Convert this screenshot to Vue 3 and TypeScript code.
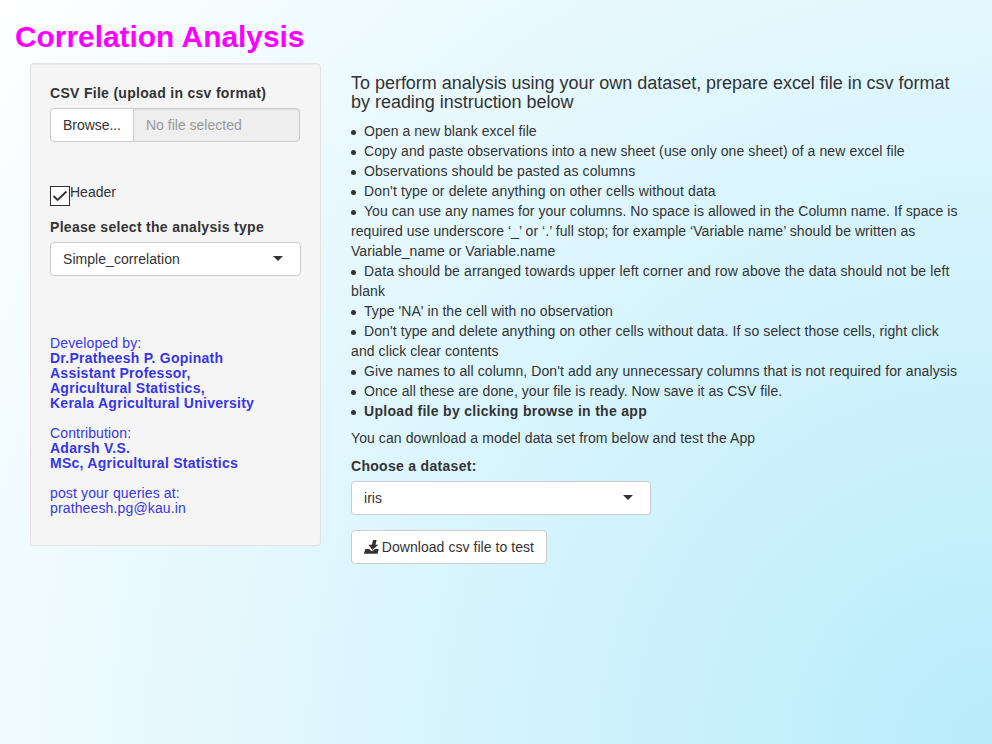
<script setup lang="ts">
import { ref } from 'vue'

interface Instruction {
  text: string
  kind?: 'strong' | 'tight' | 'loose'
}

const header = ref(true)

const instructions: Instruction[] = [
  { text: 'Open a new blank excel file', kind: 'tight' },
  { text: 'Copy and paste observations into a new sheet (use only one sheet) of a new excel file' },
  { text: 'Observations should be pasted as columns' },
  { text: "Don't type or delete anything on other cells without data", kind: 'loose' },
  {
    text: 'You can use any names for your columns. No space is allowed in the Column name. If space is required use underscore ‘_’ or ‘.’ full stop; for example ‘Variable name’ should be written as Variable_name or Variable.name',
    kind: 'tight',
  },
  {
    text: 'Data should be arranged towards upper left corner and row above the data should not be left blank',
    kind: 'loose',
  },
  { text: "Type 'NA' in the cell with no observation", kind: 'tight' },
  {
    text: "Don't type and delete anything on other cells without data. If so select those cells, right click and click clear contents",
  },
  { text: "Give names to all column, Don't add any unnecessary columns that is not required for analysis" },
  { text: 'Once all these are done, your file is ready. Now save it as CSV file.', kind: 'tight' },
  { text: 'Upload file by clicking browse in the app', kind: 'strong' },
]
</script>

<template>
  <div class="page">
    <h2 class="title">Correlation Analysis</h2>
    <div class="row">
      <form class="well" @submit.prevent>
        <div class="label">CSV File (upload in csv format)</div>
        <div class="file-group">
          <button type="button" class="browse">Browse...</button>
          <div class="file-name">No file selected</div>
        </div>
        <div class="check" @click="header = !header">
          <span class="box">
            <svg v-if="header" width="18" height="18" viewBox="0 0 18 18">
              <path d="M2.5 9 L6.6 13 L15.4 4.5" fill="none" stroke="#333" stroke-width="1.8" />
            </svg>
          </span>
          <span>Header</span>
        </div>
        <div class="label">Please select the analysis type</div>
        <div class="select">
          <span>Simple_correlation</span>
          <i class="caret"></i>
        </div>
        <h5 class="credits">
          Developed by:<br />
          <b>Dr.Pratheesh P. Gopinath</b><br />
          <b>Assistant Professor,</b><br />
          <b>Agricultural Statistics,</b><br />
          <b>Kerala Agricultural University</b><br />
          <br />
          Contribution:<br />
          <b>Adarsh V.S.</b><br />
          <b>MSc, Agricultural Statistics</b><br />
          <br />
          post your queries at:<br />
          pratheesh.pg@kau.in
        </h5>
      </form>
      <main class="main">
        <h4 class="lead">
          To perform analysis using your own dataset, prepare excel file in csv format by reading instruction below
        </h4>
        <ul class="list">
          <li v-for="item in instructions" :key="item.text" :class="item.kind">{{ item.text }}</li>
        </ul>
        <p class="note">You can download a model data set from below and test the App</p>
        <div class="label">Choose a dataset:</div>
        <div class="select dataset">
          <span>iris</span>
          <i class="caret"></i>
        </div>
        <button type="button" class="download">
          <svg width="16" height="14" viewBox="0 0 16 14" fill="#333">
            <path d="M9.2 0 H12.8 L11.6 4.8 H14.6 L8.5 10 L4.6 4.8 H8 Z" />
            <path d="M1.3 9 H5.2 L7.9 11.4 L11.2 9 H15 L13.8 13.8 H-0.1 Z" />
          </svg>
          <span>Download csv file to test</span>
        </button>
      </main>
    </div>
  </div>
</template>

<style>
body {
  margin: 0;
}
</style>

<style scoped>
.page {
  box-sizing: border-box;
  min-height: 744px;
  padding: 20px 15px 0;
  background: radial-gradient(circle farthest-corner at 100% 100%, #b8ecfb 0%, #ffffff 100%);
  color: #333;
  font: 14px/20px "Liberation Sans", Arial, sans-serif;
}
.title {
  margin: 0 0 10px;
  font-size: 30px;
  line-height: 33px;
  font-weight: 700;
  letter-spacing: -0.06px;
  color: #ff00ff;
}
.row {
  display: flex;
  align-items: flex-start;
  padding: 0 15px;
}
.well {
  box-sizing: border-box;
  flex: none;
  width: 291px;
  height: 483px;
  padding: 19px;
  background: #f5f5f5;
  border: 1px solid #e3e3e3;
  border-radius: 4px;
  box-shadow: inset 0 1px 1px rgba(0, 0, 0, 0.05);
}
.label {
  margin-bottom: 5px;
  font-weight: 700;
  letter-spacing: 0.3px;
}
.file-group {
  display: flex;
  width: 250px;
  height: 34px;
}
.browse {
  box-sizing: border-box;
  width: 84px;
  padding: 0 0 0 12px;
  text-align: left;
  font: inherit;
  letter-spacing: -0.05px;
  color: #333;
  background: #fff;
  border: 1px solid #ccc;
  border-radius: 4px 0 0 4px;
}
.file-name {
  box-sizing: border-box;
  flex: 1;
  margin-left: -1px;
  padding: 6px 12px;
  color: #999;
  background: #eee;
  border: 1px solid #ccc;
  border-radius: 0 4px 4px 0;
  box-shadow: inset 0 1px 1px rgba(0, 0, 0, 0.075);
}
.check {
  display: flex;
  margin: 40px 0 15px;
  height: 20px;
}
.box {
  box-sizing: border-box;
  width: 20px;
  height: 20px;
  margin-top: 4px;
  background: #fff;
  border: 1px solid #333;
}
.box svg {
  display: block;
}
.select {
  box-sizing: border-box;
  display: flex;
  align-items: center;
  justify-content: space-between;
  width: 251px;
  height: 34px;
  padding: 0 17px 0 12px;
  letter-spacing: 0.05px;
  background: #fff;
  border: 1px solid #ccc;
  border-radius: 4px;
}
.caret {
  margin-bottom: 1px;
  border: 5px solid transparent;
  border-top-color: #333;
  border-bottom-width: 0;
}
.credits {
  margin: 60px 0 0;
  font-size: 14px;
  line-height: 15px;
  font-weight: 400;
  letter-spacing: 0.14px;
  color: #3535ea;
}
.credits b {
  letter-spacing: 0.26px;
}
.main {
  flex: none;
  width: 611px;
  margin-left: 30px;
}
.lead {
  margin: 11px 0 9px;
  font-size: 18px;
  line-height: 19px;
  font-weight: 400;
  letter-spacing: -0.025px;
}
.list {
  margin: 0 0 7px;
  padding: 0;
  list-style: none;
  letter-spacing: 0.09px;
}
.list li::before {
  content: "";
  display: inline-block;
  width: 5px;
  height: 5px;
  margin-right: 8px;
  vertical-align: 1px;
  border-radius: 50%;
  background: #333;
}
.tight {
  letter-spacing: 0.055px;
}
.loose {
  letter-spacing: 0.13px;
}
.strong {
  font-weight: 700;
  letter-spacing: 0.3px;
}
.note {
  margin: 0 0 8px;
  letter-spacing: 0.09px;
}
.dataset {
  width: 300px;
}
.download {
  box-sizing: border-box;
  display: flex;
  align-items: center;
  gap: 2px;
  width: 196px;
  height: 34px;
  margin-top: 15px;
  padding: 0 12px;
  font: inherit;
  letter-spacing: 0.05px;
  color: #333;
  white-space: nowrap;
  background: #fff;
  border: 1px solid #ccc;
  border-radius: 4px;
}
</style>
